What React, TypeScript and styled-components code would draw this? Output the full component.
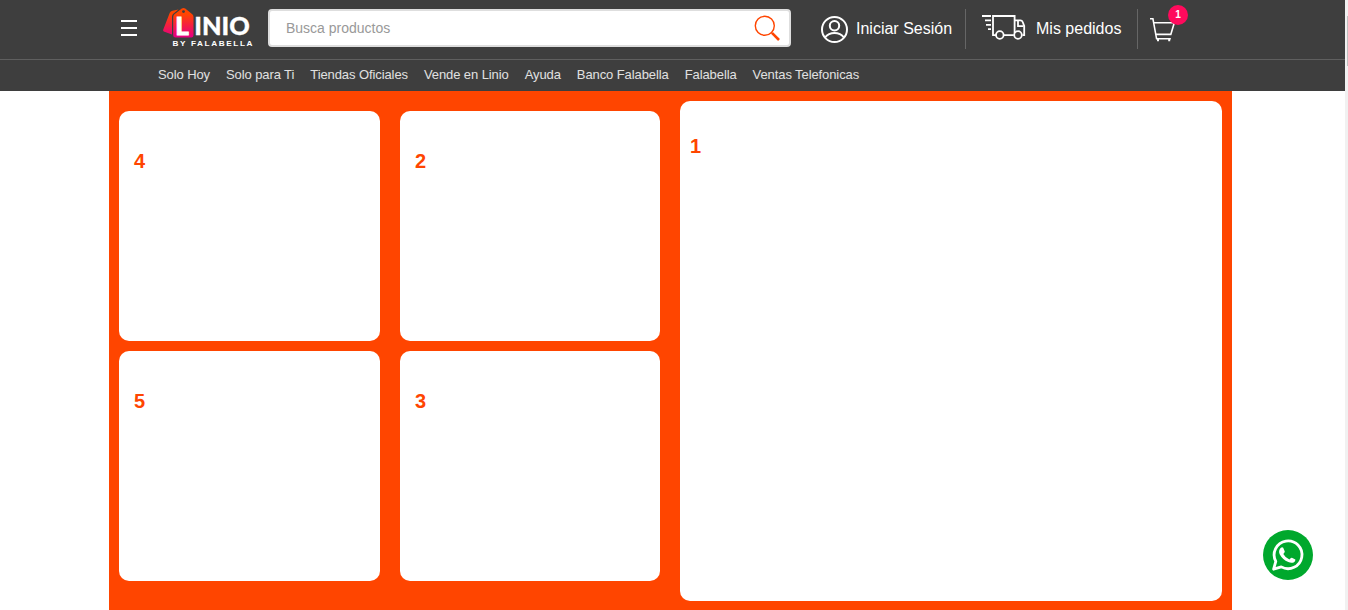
import React from "react";
import styled, { createGlobalStyle } from "styled-components";

const Global = createGlobalStyle`
  *, *::before, *::after { box-sizing: border-box; }
  body { margin: 0; background: #fff; overflow: hidden; font-family: "Liberation Sans", Arial, sans-serif; }
`;

const Page = styled.div`
  display: flex;
  height: 610px;
  overflow: hidden;
`;
const Content = styled.div`
  flex: 1;
  min-width: 0;
`;
const ScrollTrack = styled.div`
  width: 3px;
  height: 610px;
  background: #f1f1f1;
  padding: 16px 0 0 2px;
`;
const ScrollThumb = styled.div`
  height: 50px;
  background: #c1c1c1;
`;

const Header = styled.header`
  background: #3e3e3e;
  height: 91px;
`;
const TopBar = styled.div`
  height: 60px;
  border-bottom: 1px solid #5f5f5f;
  display: flex;
  align-items: flex-start;
  padding-left: 121px;
`;
const MenuButton = styled.div`
  display: flex;
  flex-direction: column;
  gap: 5px;
  width: 16px;
  padding-top: 20px;
`;
const MenuLine = styled.span`
  height: 2px;
  background: #fff;
`;
const Logo = styled.svg`
  display: block;
  width: 95px;
  height: 50px;
  margin-left: 23px;
`;
const SearchBox = styled.div`
  width: 523px;
  height: 38px;
  margin: 9px 0 0 13px;
  padding: 0 8px 0 16px;
  border: 2px solid #dedede;
  border-radius: 4px;
  background: #fff;
  display: flex;
  align-items: center;
  justify-content: space-between;
  font-size: 14px;
  color: #999;
`;
const Action = styled.div<{ $left: number; $gap: number; $width: number; $last?: boolean }>`
  position: relative;
  display: flex;
  align-items: center;
  height: 40px;
  margin-top: 9px;
  width: ${(p) => p.$width}px;
  padding-left: ${(p) => p.$left}px;
  gap: ${(p) => p.$gap}px;
  border-right: ${(p) => (p.$last ? "none" : "1px solid #666")};
  color: #fff;
  font-size: 16px;
  white-space: nowrap;
`;
const Icon = styled.svg`
  display: block;
  flex: none;
`;
const Badge = styled.span`
  position: absolute;
  left: 30px;
  top: -4px;
  width: 20px;
  height: 20px;
  border-radius: 50%;
  background: #ff0a5c;
  color: #fff;
  font-size: 10px;
  font-weight: 700;
  line-height: 20px;
  text-align: center;
`;
const Nav = styled.nav`
  display: flex;
  gap: 16px;
  height: 31px;
  padding-left: 158px;
  font-size: 13px;
  letter-spacing: -0.093px;
  line-height: 29px;
  color: #e1e1e1;
  white-space: nowrap;
`;

const Board = styled.main`
  width: 1123px;
  height: 519px;
  margin-left: 109px;
  background: #ff4500;
  display: flex;
`;
const Tiles = styled.section`
  padding: 20px 10px 0;
  display: grid;
  grid-template-columns: 261px 260px;
  grid-auto-rows: 230px;
  gap: 10px 20px;
  height: 510px;
`;
const Card = styled.div<{ $large?: boolean }>`
  background: #fff;
  border-radius: 10px;
  color: #ff4500;
  font-size: 20px;
  font-weight: 700;
  line-height: 23px;
  padding: ${(p) => (p.$large ? "34px 10px" : "39px 15px")};
`;
const Feature = styled.section`
  flex: 1;
  display: grid;
  height: 510px;
  padding: 10px 10px 0;
`;
const ChatButton = styled.div`
  position: fixed;
  left: 1263px;
  top: 530px;
  width: 50px;
  height: 50px;
`;

const links = [
  "Solo Hoy", "Solo para Ti", "Tiendas Oficiales", "Vende en Linio",
  "Ayuda", "Banco Falabella", "Falabella", "Ventas Telefonicas",
];

const LinioLogo = () => (
  <Logo viewBox="160 0 95 50">
    <defs>
      <linearGradient id="tag" gradientUnits="userSpaceOnUse" x1="0" y1="14" x2="0" y2="36">
        <stop offset="0" stopColor="#ff4500" />
        <stop offset="0.5" stopColor="#f5203f" />
        <stop offset="1" stopColor="#e6007e" />
      </linearGradient>
    </defs>
    <path d="M169.8 12.8 Q170.6 11 172.5 10.7 L178.5 9.6 L173 14 Q172 15 172 16.5 V34.5 L163.8 31.6 Q162.8 31 163.2 29.8 Z" fill="url(#tag)" />
    <path d="M181.8 8.6 Q183.5 7.2 185.2 8.6 L192.3 14.3 Q193.5 15.2 193.5 17 V35.2 Q193.5 37.5 191.3 37.5 H175.4 Q173.2 37.5 173.2 35.2 V17 Q173.2 15.2 174.4 14.3 Z" fill="url(#tag)" />
    <circle cx="183.5" cy="11.6" r="1.4" fill="#3e3e3e" />
    <g fill="#fff" fontFamily="Lato, sans-serif" fontWeight="900">
      <text x="175.2" y="34.6" fontSize="24.5" textLength="13.6" lengthAdjust="spacingAndGlyphs" stroke="#fff" strokeWidth="0.8">L</text>
      <text x="194.3" y="34.7" fontSize="24.5" textLength="55.5" lengthAdjust="spacingAndGlyphs" stroke="#fff" strokeWidth="0.3">INIO</text>
      <text x="172.6" y="46" fontSize="7.2" letterSpacing="1.4" textLength="81.5" lengthAdjust="spacingAndGlyphs" fontFamily="'Liberation Sans', sans-serif" fontWeight="700">BY FALABELLA</text>
    </g>
  </Logo>
);

export default function App() {
  return (
    <Page>
      <Global />
      <Content>
        <Header>
          <TopBar>
            <MenuButton><MenuLine /><MenuLine /><MenuLine /></MenuButton>
            <LinioLogo />
            <SearchBox>
              Busca productos
              <Icon width="28" height="28" viewBox="753 14 28 28" fill="none" stroke="#ff4500">
                <circle cx="764.8" cy="25.8" r="9.5" strokeWidth="1.4" />
                <path d="M771.4 32.4 L773.4 34.4" strokeWidth="1.4" />
                <path d="M772.2 33.2 L779 40" strokeWidth="2.6" />
              </Icon>
            </SearchBox>
            <Action $left={30} $gap={8} $width={175}>
              <Icon width="27" height="27" viewBox="0 0 27 27" fill="none" stroke="#fff" strokeWidth="2">
                <circle cx="13.5" cy="13.5" r="12.5" />
                <circle cx="13.5" cy="9.7" r="4.7" />
                <path d="M4 21.5 Q7.5 17 13.5 17 Q19.5 17 23 21.5" />
              </Icon>
              Iniciar Sesión
            </Action>
            <Action $left={16} $gap={10} $width={172}>
              <Icon width="44" height="28" viewBox="982 15 44 28" fill="none" stroke="#fff" strokeWidth="1.8">
                <path d="M982 16 H991 M985 20.4 H991 M986 24.8 H991 M988 29.2 H991" />
                <path d="M996 35.2 H993 V16 H1014.6 V33 M1004 35.2 H1013.8" />
                <path d="M1014.6 20.4 H1020.5 Q1022 20.4 1022.7 22 L1024.2 26 V35.2 H1022.5" />
                <path d="M1023.5 26.2 H1018 V21" />
                <circle cx="999.8" cy="35" r="3.8" />
                <circle cx="1018" cy="35" r="3.8" />
              </Icon>
              Mis pedidos
            </Action>
            <Action $left={12} $gap={0} $width={60} $last>
              <Icon width="26" height="26" viewBox="1150 16 26 26" fill="none" stroke="#fff" strokeWidth="1.6">
                <path d="M1150 18.7 H1152.9 L1156.6 38.8 H1170.8" />
                <path d="M1153.6 22.8 H1174.3 L1170.8 34.4 H1155.8" />
                <path d="M1158 38.5 V41.2 M1169.2 38.5 V41.2" strokeWidth="2" />
              </Icon>
              <Badge>1</Badge>
            </Action>
          </TopBar>
          <Nav>{links.map((l) => <span key={l}>{l}</span>)}</Nav>
        </Header>
        <Board>
          <Tiles>
            <Card>4</Card>
            <Card>2</Card>
            <Card>5</Card>
            <Card>3</Card>
          </Tiles>
          <Feature><Card $large>1</Card></Feature>
        </Board>
      </Content>
      <ScrollTrack><ScrollThumb /></ScrollTrack>
      <ChatButton>
        <Icon width="50" height="50" viewBox="0 0 50 50">
          <circle cx="25" cy="25" r="25" fill="#00a82d" />
          <g transform="translate(-0.6 0)">
            <path d="M11.2 39.2 L13.4 31.3 A13.9 13.9 0 1 1 18.9 36.9 Z" fill="none" stroke="#fff" strokeWidth="2.8" strokeLinejoin="round" />
            <path d="M18.2 18 Q19.8 16.8 20.8 17.8 L22.4 21.6 Q22.5 22.6 20.9 24 Q23 27.8 27 29.5 Q28.6 27.4 29.5 27.8 L33 29.5 Q33.2 31.4 31.2 32.4 Q29 33.4 25.9 32.1 Q20.2 29.8 17.4 24.6 Q15.6 20.8 18.2 18 Z" fill="#fff" />
          </g>
        </Icon>
      </ChatButton>
    </Page>
  );
}
